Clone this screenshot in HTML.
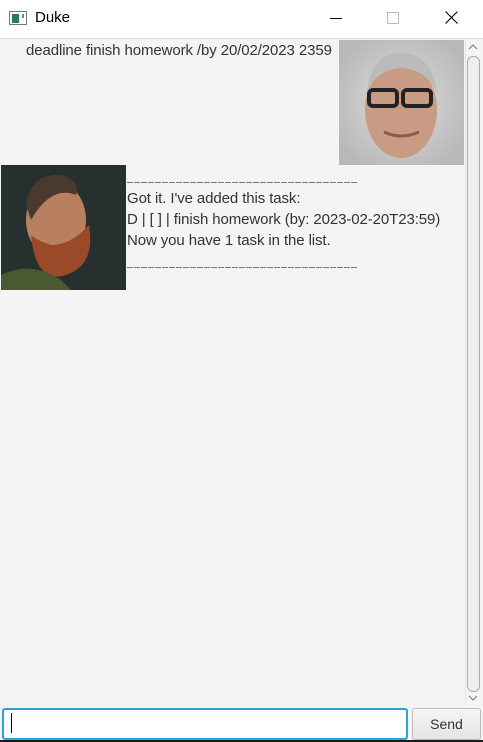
<!DOCTYPE html>
<html><head><style>
body{margin:0;width:483px;height:742px;overflow:hidden;background:#1a1a1a;font-family:"Liberation Sans",sans-serif;position:relative}
.title{position:absolute;left:0;top:0;width:483px;height:38px;background:#fff}
.main{position:absolute;left:0;top:38px;width:483px;height:701px;background:#f4f4f4;border-top:1px solid #ddd}
.t{position:absolute;font-size:15px;color:#333;white-space:nowrap;letter-spacing:-0.1px}
.dash{position:absolute;left:127px;width:230px;height:1px;background:repeating-linear-gradient(90deg,#777 0 6px,transparent 6px 7px)}
</style></head><body>
<div class="title">
<svg style="position:absolute;left:9px;top:11px" width="18" height="15"><rect x="0.5" y="0.5" width="17" height="13" fill="#fff" stroke="#777"/><rect x="3" y="3" width="7" height="9" fill="#2a7a6a"/><rect x="13" y="3" width="2" height="4" fill="#3a8"/></svg>
<div style="position:absolute;left:35px;top:9px;font-size:15px;color:#000">Duke</div>
<div style="position:absolute;left:330px;top:18px;width:12px;height:1px;background:#000"></div>
<div style="position:absolute;left:387px;top:12px;width:10px;height:10px;border:1px solid #bbb"></div>
<svg style="position:absolute;left:445px;top:11px" width="13" height="13"><path d="M0.5 0.5L12.5 12.5M12.5 0.5L0.5 12.5" stroke="#000" stroke-width="1.1"/></svg>
</div>
<div class="main">
<div class="t" style="left:26px;top:3px">deadline finish homework /by 20/02/2023 2359</div>
<svg style="position:absolute;left:339px;top:1px" width="125" height="125">
<defs><radialGradient id="g1" cx="50%" cy="50%" r="60%"><stop offset="0" stop-color="#ddd"/><stop offset="1" stop-color="#b8b8b8"/></radialGradient></defs>
<rect width="125" height="125" fill="url(#g1)"/>
<ellipse cx="62" cy="70" rx="36" ry="48" fill="#c99a84"/>
<path d="M28 55Q30 15 62 12Q95 15 98 55Q90 30 62 28Q35 30 28 55Z" fill="#bbb"/>
<rect x="30" y="50" width="28" height="16" rx="4" fill="none" stroke="#222" stroke-width="4"/>
<rect x="64" y="50" width="28" height="16" rx="4" fill="none" stroke="#222" stroke-width="4"/>
<path d="M45 92Q62 100 80 92" stroke="#8a5a4a" stroke-width="3" fill="none"/>
</svg>
<svg style="position:absolute;left:1px;top:126px" width="125" height="125">
<rect width="125" height="125" fill="#26302f"/>
<ellipse cx="55" cy="55" rx="30" ry="38" fill="#b88060"/>
<path d="M25 40Q30 8 60 10Q80 15 75 30Q50 20 30 55Z" fill="#4a3a2e"/>
<path d="M30 70Q35 120 65 110Q95 100 88 60Q70 80 50 80Q35 75 30 70Z" fill="#9a4a28"/>
<path d="M0 110Q30 95 60 115L70 125H0Z" fill="#4a5a30"/>
</svg>
<div class="dash" style="top:143px"></div>
<div class="t" style="left:127px;top:151px">Got it. I've added this task:</div>
<div class="t" style="left:127px;top:172px">D | [ ] | finish homework (by: 2023-02-20T23:59)</div>
<div class="t" style="left:127px;top:193px">Now you have 1 task in the list.</div>
<div class="dash" style="top:228px"></div>
<div style="position:absolute;left:465px;top:0;width:17px;height:667px;background:#f4f4f4;border-left:1px solid #e6e6e6"></div>
<svg style="position:absolute;left:468px;top:4px" width="10" height="7"><path d="M1 6L5 2L9 6" stroke="#777" fill="none"/></svg>
<div style="position:absolute;left:467px;top:17px;width:11px;height:634px;border:1px solid #aaa;border-radius:6px;background:#eee"></div>
<svg style="position:absolute;left:468px;top:656px" width="10" height="7"><path d="M1 1L5 5L9 1" stroke="#777" fill="none"/></svg>
<div style="position:absolute;left:2px;top:669px;width:402px;height:28px;background:#fff;border:2px solid #2aa4d8;border-radius:3px"></div>
<div style="position:absolute;left:11px;top:674px;width:1px;height:20px;background:#000"></div>
<div style="position:absolute;left:412px;top:669px;width:67px;height:30px;background:linear-gradient(#f6f6f6,#e4e4e4);border:1px solid #bbb;border-radius:3px;font-size:14px;color:#333;text-align:center;line-height:30px">Send</div>
</div>
</body></html>
